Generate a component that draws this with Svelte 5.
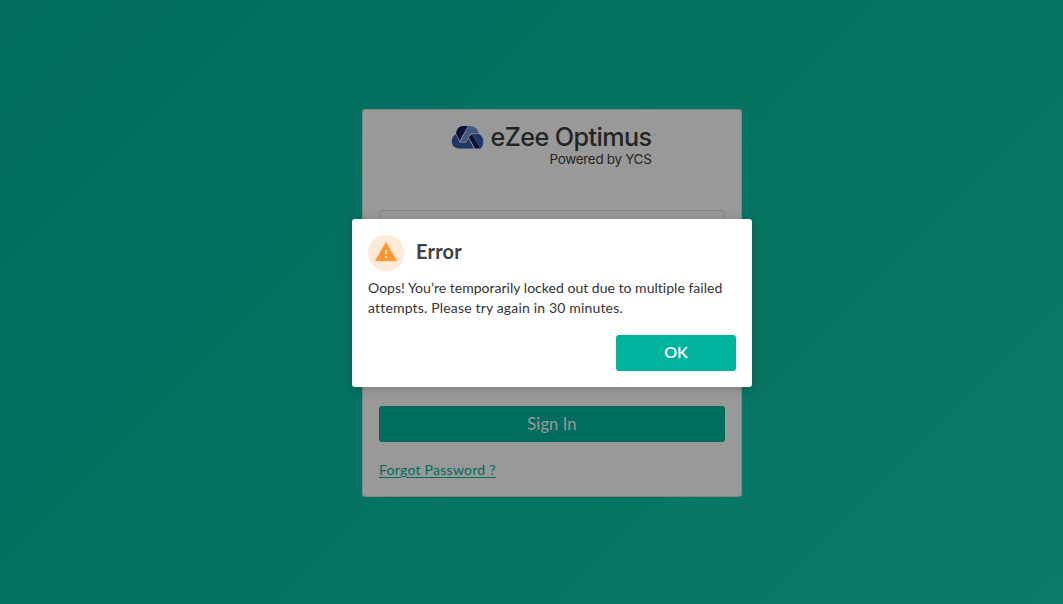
<script>
	let open = $state(true);
	let title = 'Error';
	let message = [
		'Oops! You’re temporarily locked out due to multiple failed',
		'attempts. Please try again in 30 minutes.'
	];

	function close() {
		open = false;
	}
</script>

<div class="page">
	<main class="card">
		<svg class="logo" width="208" height="50" viewBox="0 0 208 50">
			<g>
				<path fill="#3159ac" d="M8 9C5 10.500 3.800 13.500 3.800 16.500C3.800 20.500 7 23.500 11 23.500H26L20.500 13.500L18 17.500H11.500Z" />
				<path fill="#111c62" d="M8 8.500C8.500 4 11 1 15 1H20L11.500 16Z" />
				<path fill="#6f93d6" d="M20.500 1C26 .5 30 3.500 31 8.500H22.500L18 17H12Z" />
				<path fill="#3159ac" d="M24.500 9H31C34 10.500 35.300 13.500 35.300 16.500C35.300 20 34 22.500 32.500 23.500Z" />
				<path fill="#111c62" d="M20.500 12L24 9L32.500 23.500H27Z" />
				<path fill="none" stroke="#bbc6df" stroke-width=".6" d="M8 9L12 17H18M20.200 1.500L12 16.500M31 8.700H23L20.500 12.500L26.500 23.500" />
			</g>
			<text class="brand" x="42.500" y="21" textLength="161" lengthAdjust="spacingAndGlyphs">eZee Optimus</text>
			<text class="powered" x="101.500" y="38.500" textLength="102" lengthAdjust="spacingAndGlyphs">Powered by YCS</text>
		</svg>
		<div class="fields">
			<input type="text" aria-label="Username" />
		</div>
		<button class="signin">Sign In</button>
		<a class="forgot" href="#forgot">Forgot Password ?</a>
	</main>
</div>

{#if open}
	<div class="overlay">
		<div class="modal" role="alertdialog" aria-modal="true" aria-labelledby="title">
			<div class="heading">
				<span class="badge">
					<svg width="22" height="19" viewBox="0 0 22 19">
						<path fill="#ff962d" d="M11 0L22 19H0Z" />
						<path fill="#ffead7" d="M10 8h2v4h-2zM10 14h2v2h-2z" />
					</svg>
				</span>
				<h2 id="title">{title}</h2>
			</div>
			<p>
				{#each message as line}
					<span>{line}</span>
				{/each}
			</p>
			<button class="ok" onclick={close}>OK</button>
		</div>
	</div>
{/if}

<style>
	:global(body) {
		overflow: hidden;
		font-family: Lato, 'Noto Sans', sans-serif;
		font-variant-ligatures: none;
	}

	.page,
	.overlay {
		box-sizing: border-box;
		width: 1063px;
		height: 604px;
		padding-left: 41px;
		display: flex;
		justify-content: center;
		align-items: flex-start;
	}

	.page {
		padding-top: 109px;
		background: linear-gradient(135deg, #00b39d, #14cca9);
	}

	.card {
		box-sizing: border-box;
		width: 380px;
		height: 388px;
		padding: 15px 16px 0;
		display: flex;
		flex-direction: column;
		align-items: stretch;
		background: #fff;
		border: 1px solid #dcdcdc;
		border-radius: 3px;
	}

	.logo {
		align-self: center;
		flex: none;
		overflow: visible;
	}

	.brand,
	.powered {
		font-family: Inter, sans-serif;
		fill: #3c3c3c;
	}

	.brand {
		font-size: 25.5px;
		font-weight: 500;
		letter-spacing: -0.6px;
	}

	.powered {
		font-size: 13px;
		letter-spacing: -0.3px;
	}

	.fields {
		height: 192px;
		padding-top: 35px;
		box-sizing: border-box;
	}

	input {
		box-sizing: border-box;
		width: 100%;
		height: 36px;
		border: 1px solid #dcdcdc;
		border-radius: 3px;
	}

	button {
		height: 36px;
		padding: 0 0 2px;
		border: none;
		border-radius: 3px;
		background: #00b39f;
		color: #fff;
		font-family: inherit;
		font-size: 16px;
	}

	.signin {
		margin-top: 39px;
		padding-bottom: 1px;
		flex: none;
		font-size: 16.5px;
		letter-spacing: 0.1px;
	}

	.forgot {
		align-self: flex-start;
		margin-top: 18px;
		color: #00b39f;
		font-size: 14px;
		line-height: 20px;
		letter-spacing: 0.26px;
		text-underline-offset: 2px;
	}

	.overlay {
		position: absolute;
		top: 0;
		left: 0;
		padding-top: 219px;
		background: rgba(0, 0, 0, 0.4);
	}

	.modal {
		box-sizing: border-box;
		width: 400px;
		padding: 16px;
		display: flex;
		flex-direction: column;
		background: #fff;
		border-radius: 3px;
		box-shadow: 0 2px 12px rgba(0, 0, 0, 0.2);
	}

	.heading {
		display: flex;
		align-items: center;
		gap: 12px;
	}

	.badge {
		width: 36px;
		height: 36px;
		border-radius: 50%;
		background: #ffead7;
		display: flex;
		justify-content: center;
		align-items: center;
	}

	.badge svg {
		margin-bottom: 3px;
	}

	h2 {
		margin: 0;
		padding-bottom: 3px;
		font-size: 20px;
		line-height: 33px;
		font-weight: 700;
		letter-spacing: 0.2px;
		color: #404040;
	}

	p {
		margin: 7px 0 16.6px;
		color: #333;
		font-size: 14px;
		line-height: 20px;
	}

	p span {
		display: block;
		white-space: nowrap;
		letter-spacing: 0.02px;
	}

	p span:last-child {
		letter-spacing: 0.17px;
	}

	.ok {
		align-self: flex-end;
		width: 120px;
		font-weight: 600;
	}
</style>
